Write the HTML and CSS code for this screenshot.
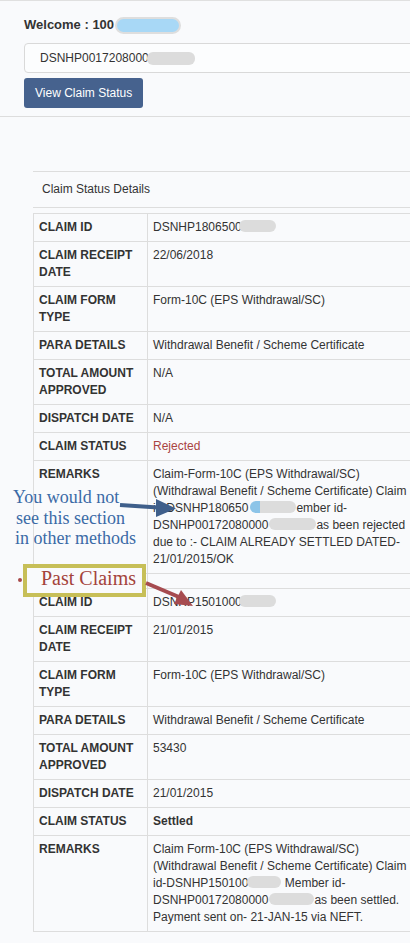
FILE: index.html
```html
<!DOCTYPE html>
<html>
<head>
<meta charset="utf-8">
<title>Claim Status</title>
<link rel="stylesheet" href="styles.css">
</head>
<body>
<div class="page">
  <section class="search">
    <div class="welcome">Welcome : 100<span class="mask-blue"></span></div>
    <div class="field">DSNHP0017208000<span class="mask mask-input"></span></div>
    <button class="btn">View Claim Status</button>
  </section>

  <section class="panel">
    <div class="panel-heading">Claim Status Details</div>
    <table class="details">
      <colgroup><col class="col-label"><col class="col-value"></colgroup>
      <tr><th>CLAIM ID</th><td>DSNHP1806500<span class="mask mask-id"></span></td></tr>
      <tr><th>CLAIM RECEIPT DATE</th><td>22/06/2018</td></tr>
      <tr><th>CLAIM FORM TYPE</th><td>Form-10C (EPS Withdrawal/SC)</td></tr>
      <tr><th>PARA DETAILS</th><td>Withdrawal Benefit / Scheme Certificate</td></tr>
      <tr><th>TOTAL AMOUNT APPROVED</th><td>N/A</td></tr>
      <tr><th>DISPATCH DATE</th><td>N/A</td></tr>
      <tr><th>CLAIM STATUS</th><td class="rejected">Rejected</td></tr>
      <tr><th>REMARKS</th><td class="remarks">Claim-Form-10C (EPS Withdrawal/SC)<br>(Withdrawal Benefit / Scheme Certificate) Claim<br>id-DSNHP180650<span class="mask mask-r1"></span>ember id-<br>DSNHP00172080000<span class="mask mask-r2"></span>as been rejected<br>due to :- CLAIM ALREADY SETTLED DATED-<br>21/01/2015/OK</td></tr>
      <tr class="spacer"><th></th><td></td></tr>
      <tr><th>CLAIM ID</th><td>DSNHP1501000<span class="mask mask-id"></span></td></tr>
      <tr><th>CLAIM RECEIPT DATE</th><td>21/01/2015</td></tr>
      <tr><th>CLAIM FORM TYPE</th><td>Form-10C (EPS Withdrawal/SC)</td></tr>
      <tr><th>PARA DETAILS</th><td>Withdrawal Benefit / Scheme Certificate</td></tr>
      <tr><th>TOTAL AMOUNT APPROVED</th><td>53430</td></tr>
      <tr><th>DISPATCH DATE</th><td>21/01/2015</td></tr>
      <tr><th>CLAIM STATUS</th><td class="settled">Settled</td></tr>
      <tr><th>REMARKS</th><td class="remarks">Claim Form-10C (EPS Withdrawal/SC)<br>(Withdrawal Benefit / Scheme Certificate) Claim<br>id-DSNHP150100<span class="mask mask-r3"></span> Member id-<br>DSNHP00172080000<span class="mask mask-r4"></span>as been settled.<br>Payment sent on- 21-JAN-15 via NEFT.</td></tr>
    </table>
  </section>

  <div class="note-blue"><span class="l1">You would not</span><span class="l2">see this section</span><span class="l3">in other methods</span></div>
  <div class="past-box">Past Claims</div>

  <svg class="annot" width="410" height="943" viewBox="0 0 410 943">
    <circle cx="20" cy="580" r="2" fill="#a84a4a"/>
    <line x1="120" y1="505" x2="158" y2="507.5" stroke="#3f5f8b" stroke-width="4"/>
    <polygon points="156,499 176,508.5 156,517" fill="#3f5f8b"/>
    <line x1="146" y1="583" x2="179" y2="597" stroke="#a64b50" stroke-width="4"/>
    <polygon points="181,590 193,606 174,604" fill="#a64b50"/>
  </svg>
</div>
</body>
</html>
```

FILE: styles.css
```css
* { box-sizing: border-box; }

body {
  margin: 0;
  background: #f9fafc;
  font-family: "Liberation Sans", Arial, sans-serif;
  color: #333;
  overflow: hidden;
}

.page {
  position: relative;
  width: 410px;
  min-height: 943px;
  overflow: hidden;
}

/* search block */
.search {
  width: 430px;
  border-top: 1px solid #e0e0e0;
  border-bottom: 1px solid #ddd;
  padding: 15px 0 8px 24px;
}

.welcome {
  font-size: 13px;
  font-weight: bold;
  line-height: 18px;
  height: 18px;
  display: flex;
  align-items: center;
}

.mask-blue {
  display: inline-block;
  width: 66px;
  height: 17px;
  margin-left: 1px;
  background: #a8d8f6;
  border: 2px solid #dedede;
  border-radius: 9px;
}

.field {
  margin-top: 9px;
  height: 30px;
  width: 400px;
  border: 1px solid #d9d9d9;
  border-radius: 4px;
  background: #fcfdfe;
  padding-left: 15px;
  font-size: 12px;
  display: flex;
  align-items: center;
}

.mask {
  display: inline-block;
  height: 12px;
  background: #dcdcdc;
  border-radius: 6px;
  vertical-align: -1px;
}

.mask-input { width: 48px; height: 13px; margin-left: -2px; }

.btn {
  display: block;
  margin-top: 5px;
  height: 30px;
  padding: 0 11px;
  border: none;
  border-radius: 3px;
  background: #46628e;
  color: #fff;
  font-family: "Liberation Sans", Arial, sans-serif;
  font-size: 12px;
}

/* panel */
.panel {
  margin: 54px 0 0 33px;
  width: 420px;
}

.panel-heading {
  border-top: 1px solid #ddd;
  border-bottom: 1px solid #ddd;
  padding: 10px 9px;
  font-size: 12px;
  line-height: 15px;
  height: 37px;
}

.details {
  margin-top: 5px;
  width: 390px;
  table-layout: fixed;
  border-collapse: collapse;
  font-size: 12px;
  line-height: 17px;
}

.col-label { width: 114px; }

.details th,
.details td {
  border: 1px solid #ddd;
  padding: 5px;
  vertical-align: top;
  text-align: left;
}

.details th { font-weight: bold; }

.details .spacer th,
.details .spacer td {
  padding: 0;
  height: 15px;
}

.rejected { color: #a94442; }
.settled { font-weight: bold; }
.remarks { white-space: nowrap; }

.mask-id { width: 37px; margin-left: -3px; }
.mask-r1 { width: 46px; margin-left: 2px; background: linear-gradient(90deg, #8cc4e8 0 10px, #dcdcdc 10px); }
.mask-r2 { width: 47px; margin-left: 1px; }
.mask-r3 { width: 34px; margin-left: -1px; }
.mask-r4 { width: 45px; margin-left: 1px; }

/* annotations laid over the page */
.note-blue {
  position: absolute;
  left: 13px;
  top: 487px;
  font-family: "Liberation Serif", "Times New Roman", serif;
  font-size: 18px;
  line-height: 20.5px;
  color: #3b6aa6;
}

.note-blue span { display: block; white-space: nowrap; }
.note-blue .l2 { margin-left: 3px; }
.note-blue .l3 { margin-left: 2px; }

.past-box {
  position: absolute;
  left: 23px;
  top: 564px;
  width: 123px;
  height: 33px;
  border: 4px solid #c7bf58;
  background: #f9fafc;
  padding-left: 14px;
  font-family: "Liberation Serif", "Times New Roman", serif;
  font-size: 20px;
  line-height: 21px;
  color: #a4433b;
}

.annot {
  position: absolute;
  left: 0;
  top: 0;
  pointer-events: none;
}
```
